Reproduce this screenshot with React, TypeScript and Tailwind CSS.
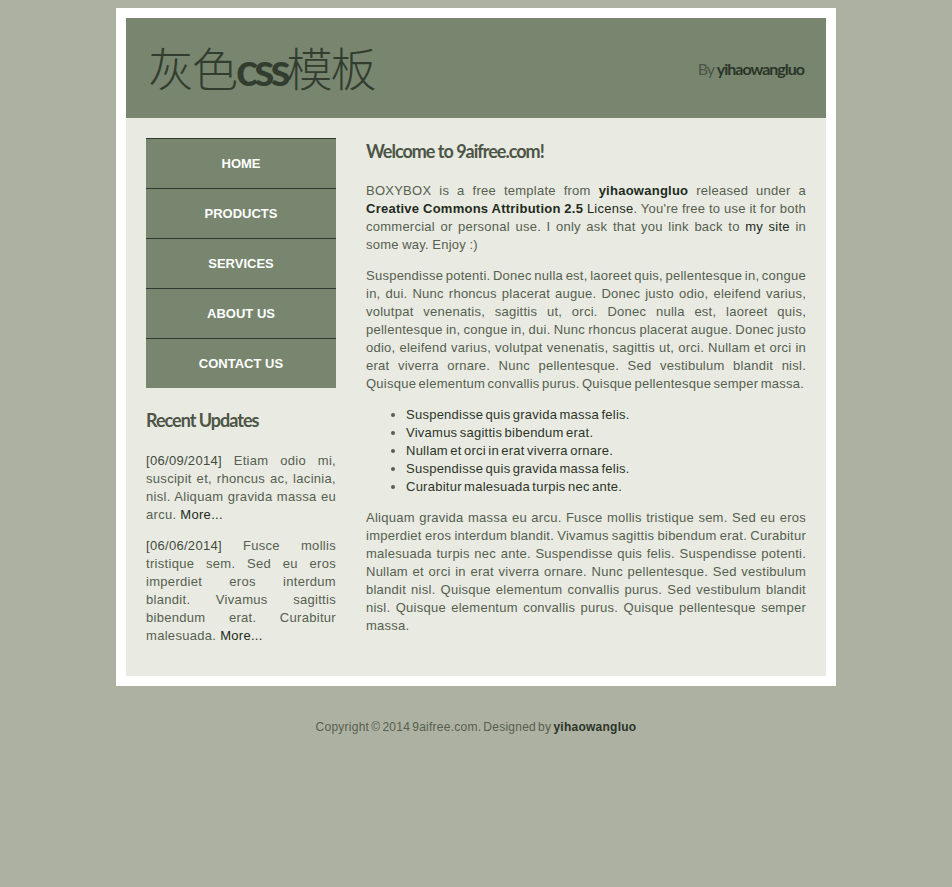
import React from 'react';

const navItems = ['HOME', 'PRODUCTS', 'SERVICES', 'ABOUT US', 'CONTACT US'];

const bullets = [
  'Suspendisse quis gravida massa felis.',
  'Vivamus sagittis bibendum erat.',
  'Nullam et orci in erat viverra ornare.',
  'Suspendisse quis gravida massa felis.',
  'Curabitur malesuada turpis nec ante.',
];

const body = "font-['Liberation_Sans',Arial,sans-serif] tracking-[0.25px] [word-spacing:-1.5px]";
const heading = "font-['Lato','Liberation_Sans',sans-serif] tracking-[-1px] [word-spacing:0px]";

export default function App() {
  return (
    <div className={`min-h-[887px] bg-[#adb1a2] pt-2 text-[13px] leading-[18px] text-[#55604f] ${body}`}>
      <div className="mx-auto w-[720px] bg-white p-[10px]">
        <div className="flex h-[100px] items-center justify-between bg-[#788670] px-[22px] pb-[2px]">
          <h1 className="font-['Noto_Sans_CJK_SC','Lato',sans-serif] text-[46px] font-light leading-none tracking-[-2px] text-[#333d2f]">
            灰色<span className="font-['Lato',sans-serif] font-bold tracking-[-4px]">css</span>模板
          </h1>
          <div className={`${heading} mt-[4px] text-[16px] text-[#4c5546]`}>
            By <span className="font-bold text-[#2b3528]">yihaowangluo</span>
          </div>
        </div>

        <div className="flex gap-[30px] bg-[#e9eae2] px-[20px] pb-[31px] pt-[20px]">
          <div className="w-[190px] shrink-0 tracking-[0.3px] [word-spacing:0px]">
            <ul>
              {navItems.map((item) => (
                <li
                  key={item}
                  className="flex h-[50px] items-center justify-center border-t border-[#2f3a2e] bg-[#788670] text-[13px] font-bold tracking-normal text-white"
                >
                  {item}
                </li>
              ))}
            </ul>

            <h2 className={`${heading} mt-[20px] text-[18px] font-bold leading-[24px] text-[#4c5546]`}>
              Recent Updates
            </h2>

            <p className="mt-[20px] text-justify">
              <span className="text-[#3f4a3c]">[06/09/2014]</span> Etiam odio mi, suscipit et, rhoncus ac, lacinia,
              nisl. Aliquam gravida massa eu arcu. <span className="text-[#222a20]">More...</span>
            </p>
            <p className="mt-[13px] text-justify">
              <span className="text-[#3f4a3c]">[06/06/2014]</span> Fusce mollis tristique sem. Sed eu eros imperdiet
              eros interdum blandit. Vivamus sagittis bibendum erat. Curabitur malesuada.{' '}
              <span className="text-[#222a20]">More...</span>
            </p>
          </div>

          <div className="w-[440px]">
            <h2 className={`${heading} mt-[1px] text-[18px] font-bold leading-[24px] text-[#4c5546]`}>
              Welcome to 9aifree.com!
            </h2>

            <p className="mt-[19px] text-justify [word-spacing:-0.5px]">
              BOXYBOX is a free template from <span className="font-bold text-[#222a20]">yihaowangluo</span> released
              under a <span className="font-bold text-[#222a20]">Creative Commons Attribution 2.5</span>{' '}
              <span className="text-[#222a20]">License</span>. You're free to use it for both commercial or personal
              use. I only ask that you link back to <span className="text-[#222a20]">my site</span> in some way. Enjoy
              :)
            </p>

            <p className="mt-[13px] text-justify">
              Suspendisse potenti. Donec nulla est, laoreet quis, pellentesque in, congue in, dui. Nunc rhoncus placerat
              augue. Donec justo odio, eleifend varius, volutpat venenatis, sagittis ut, orci. Donec nulla est, laoreet
              quis, pellentesque in, congue in, dui. Nunc rhoncus placerat augue. Donec justo odio, eleifend varius,
              volutpat venenatis, sagittis ut, orci. Nullam et orci in erat viverra ornare. Nunc pellentesque. Sed
              vestibulum blandit nisl. Quisque elementum convallis purus. Quisque pellentesque semper massa.
            </p>

            <ul className="mt-[13px] list-disc pl-[40px] text-[#2b3528] marker:text-[#55604f]">
              {bullets.map((b, i) => (
                <li key={i}>{b}</li>
              ))}
            </ul>

            <p className="mt-[13px] text-justify">
              Aliquam gravida massa eu arcu. Fusce mollis tristique sem. Sed eu eros imperdiet eros interdum blandit.
              Vivamus sagittis bibendum erat. Curabitur malesuada turpis nec ante. Suspendisse quis felis. Suspendisse
              potenti. Nullam et orci in erat viverra ornare. Nunc pellentesque. Sed vestibulum blandit nisl. Quisque
              elementum convallis purus. Sed vestibulum blandit nisl. Quisque elementum convallis purus. Quisque
              pellentesque semper massa.
            </p>
          </div>
        </div>
      </div>

      <div className="pt-[32px] text-center text-[12px] text-[#55604f]">
        Copyright © 2014 9aifree.com. Designed by <span className="font-bold text-[#2b3528]">yihaowangluo</span>
      </div>
    </div>
  );
}
